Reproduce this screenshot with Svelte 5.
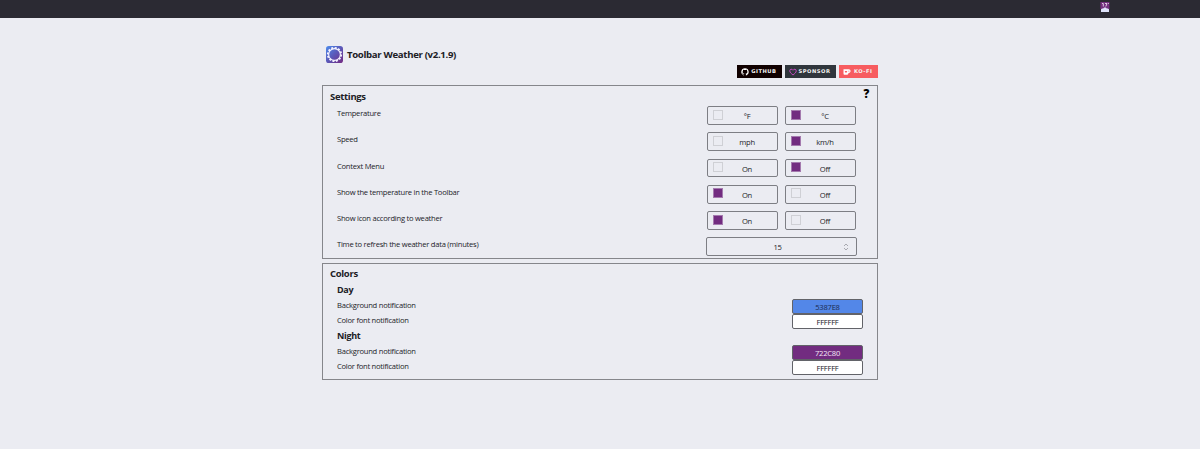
<script>
  const rows = [
    { label: 'Temperature', options: ['°F', '°C'], selected: 1 },
    { label: 'Speed', options: ['mph', 'km/h'], selected: 1 },
    { label: 'Context Menu', options: ['On', 'Off'], selected: 1 },
    { label: 'Show the temperature in the Toolbar', options: ['On', 'Off'], selected: 0 },
    { label: 'Show icon according to weather', options: ['On', 'Off'], selected: 0 }
  ];
  const groups = [
    { name: 'Day', bg: '5387E8', ink: '#1c2c50' },
    { name: 'Night', bg: '722C80', ink: '#f4e8f6' }
  ];
</script>

<header>
  <svg class="tray" width="10" height="12" viewBox="0 0 10 12">
    <rect x=".4" y="0" width="9" height="7" fill="#73307f" />
    <path d="M2 1.5h1.3v3M5 1.5h2L5.8 4.5M8 1.5h.8" fill="none" stroke="#e8d8ec" stroke-width=".9" />
    <path d="M1 10V7.3l1.2-.8h1l1-.9h1.6l1 .9h1l1.2.8V10z" fill="#dfe3fb" />
  </svg>
</header>

<main>
  <div class="brand">
    <svg width="17" height="17" viewBox="0 0 18 18">
      <defs>
        <linearGradient id="sky" x1="0" y1="0" x2="1" y2="1">
          <stop offset="0" stop-color="#4d8cec" /><stop offset=".5" stop-color="#5b58b8" /><stop offset="1" stop-color="#742981" />
        </linearGradient>
      </defs>
      <rect width="18" height="18" rx="3" fill="url(#sky)" />
      <circle cx="9" cy="9" r="6.2" fill="none" stroke="#f5f3ff" stroke-width="1.2" />
      <circle cx="9" cy="9" r="7.1" fill="none" stroke="#f5f3ff" stroke-width="1.9" stroke-dasharray="2.1 1.617" />
    </svg>
    <h1>Toolbar Weather (v2.1.9)</h1>
  </div>

  <div class="badges">
    <span class="badge github">
      <svg width="8" height="8" viewBox="0 0 16 16"><path fill="#fff" d="M8 .5a7.5 7.5 0 0 0-2.4 14.6c.4.1.5-.2.5-.4v-1.5c-2 .4-2.6-.9-2.6-.9-.4-.9-.9-1.2-.9-1.2-.7-.5.1-.5.1-.5.8.1 1.2.8 1.2.8.7 1.2 1.8.8 2.3.6 0-.5.3-.8.5-1-1.7-.2-3.4-.8-3.4-3.7 0-.8.3-1.5.8-2-.1-.2-.4-1 .1-2 0 0 .6-.2 2 .8a7 7 0 0 1 3.7 0c1.4-1 2-.8 2-.8.5 1 .2 1.8.1 2 .5.5.8 1.2.8 2 0 2.9-1.8 3.5-3.5 3.7.3.3.5.7.5 1.4v2.3c0 .2.1.5.5.4A7.5 7.5 0 0 0 8 .5z" /></svg>
      <b>GITHUB</b>
    </span>
    <span class="badge sponsor">
      <svg width="8" height="8" viewBox="0 0 16 16"><path d="M8 14C5 11.5 1.500 9 1.500 5.700c0-3.800 4.800-4.500 6.500-1.200 1.700-3.300 6.500-2.600 6.500 1.200C14.500 9 11 11.500 8 14z" fill="none" stroke="#c04bbd" stroke-width="2" /></svg>
      <b>SPONSOR</b>
    </span>
    <span class="badge kofi">
      <svg width="8" height="8" viewBox="0 0 16 16"><path d="M1 2.500h10.500c5 0 4.700 7.500 0 7.500H11c-.3 2-1 3.500-2.500 3.500h-5C1.800 13.500 1 12.500 1 10.500z" fill="#fff" /><path d="M11.300 5.200v2.600c2 0 2-2.600 0-2.600M6 10 3.700 7.500C3 6 5.200 5 6 6.500 6.800 5 9 6 8.300 7.500z" fill="#f75c60" /></svg>
      <b>KO-FI</b>
    </span>
  </div>

  <section class="settings">
    <div class="head"><h2>Settings</h2><span class="help">?</span></div>
    {#each rows as row}
      <div class="row">
        <span class="label">{row.label}</span>
        <div class="options">
          {#each row.options as option, i}
            <div class="option"><i class:on={row.selected === i}></i><span>{option}</span></div>
          {/each}
        </div>
      </div>
    {/each}
    <div class="row">
      <span class="label">Time to refresh the weather data (minutes)</span>
      <div class="number">
        <span>15</span>
        <svg width="6" height="8" viewBox="0 0 6 8"><path d="M1 3 3 1l2 2M1 5l2 2 2-2" fill="none" stroke="#a0a1a8" stroke-width=".9" /></svg>
      </div>
    </div>
  </section>

  <section class="colors">
    <h2>Colors</h2>
    {#each groups as group}
      <h3>{group.name}</h3>
      <div class="color-row">
        <span class="label">Background notification</span>
        <div class="swatch" style="background: #{group.bg}; color: {group.ink}">{group.bg}</div>
      </div>
      <div class="color-row">
        <span class="label">Color font notification</span>
        <div class="swatch">FFFFFF</div>
      </div>
    {/each}
  </section>
</main>

<style>
  :global(body) {
    margin: 0;
    min-height: 449px;
    background: #ebecf2;
    color: #222228;
    font-family: "Open Sans", "Noto Sans", sans-serif;
    font-size: 7.6px;
    letter-spacing: -.25px;
  }
  header {
    height: 18px;
    box-sizing: border-box;
    padding: 2px 90px 0 0;
    display: flex;
    justify-content: flex-end;
    background: #2b2a33;
  }
  .tray { display: block; }
  main { width: 556px; margin: 0 auto; }
  h1, h2, h3 { margin: 0; font-weight: 700; color: #202025; letter-spacing: -.32px; }
  .brand {
    display: flex;
    align-items: center;
    gap: 4px;
    padding: 27px 0 0 4px;
    height: 18px;
  }
  .brand svg { flex: none; }
  h1 { font-size: 9.6px; line-height: 18px; padding-top: 2px; white-space: nowrap; }
  .badges {
    display: flex;
    justify-content: flex-end;
    gap: 3.5px;
    height: 13px;
    padding: 2px .5px 7px;
  }
  .badge {
    box-sizing: border-box;
    display: flex;
    align-items: center;
    justify-content: space-between;
    padding: 0 5.5px 0 4px;
    color: #f3f3f3;
  }
  .badge svg { flex: none; }
  .badge b { font: 900 5.2px/13px "DejaVu Sans", sans-serif; letter-spacing: .5px; margin-right: -.5px; }
  .github { width: 45px; background: #100000; }
  .sponsor { width: 50.5px; background: #30363d; }
  .kofi { width: 38.5px; background: #f75c60; }
  section { box-sizing: border-box; border: 1px solid #85868b; }
  .settings { height: 174px; }
  .head { display: flex; justify-content: space-between; height: 20.3px; padding-right: 8px; }
  h2 { font-size: 9.5px; line-height: 13px; padding: 4px 0 0 7px; }
  .help { font: 900 11.5px/16px "Open Sans", sans-serif; color: #000; }
  .row {
    display: flex;
    justify-content: space-between;
    height: 26.2px;
    padding: 0 21px 0 14px;
  }
  .row > .label { padding-top: 2px; }
  .label { line-height: 10px; white-space: nowrap; }
  .options { display: flex; gap: 7px; }
  .option {
    box-sizing: border-box;
    width: 71px;
    height: 18.7px;
    border: 1px solid #7d7e84;
    border-radius: 2px;
    display: flex;
    padding-left: 5px;
  }
  .option i {
    box-sizing: border-box;
    width: 10px;
    height: 10px;
    margin-top: 2.5px;
    border: 1px solid #cfd0d5;
  }
  .option i.on { background: #722c80; border-color: #a47aae; }
  .option span { flex: 1; text-align: center; line-height: 18px; padding-right: 6px; }
  .number {
    box-sizing: border-box;
    width: 151px;
    height: 18.7px;
    margin-right: -1px;
    border: 1px solid #7d7e84;
    border-radius: 2px;
    display: flex;
    align-items: center;
    padding-right: 7px;
  }
  .number span { flex: 1; text-align: center; line-height: 18px; padding-left: 5px; }
  .colors { margin-top: 4px; height: 117px; }
  .colors h2 { height: 15px; line-height: 12px; }
  h3 { font-size: 9px; line-height: 14px; padding-left: 14px; height: 15.8px; }
  .color-row {
    display: flex;
    justify-content: space-between;
    align-items: flex-start;
    height: 15px;
    padding: 0 14px;
  }
  .color-row .label { padding-top: 1.5px; }
  .swatch {
    box-sizing: border-box;
    width: 71px;
    height: 14.5px;
    margin-top: .5px;
    border: 1px solid #626369;
    border-radius: 2px;
    background: #fff;
    text-align: center;
    line-height: 14px;
  }
</style>
